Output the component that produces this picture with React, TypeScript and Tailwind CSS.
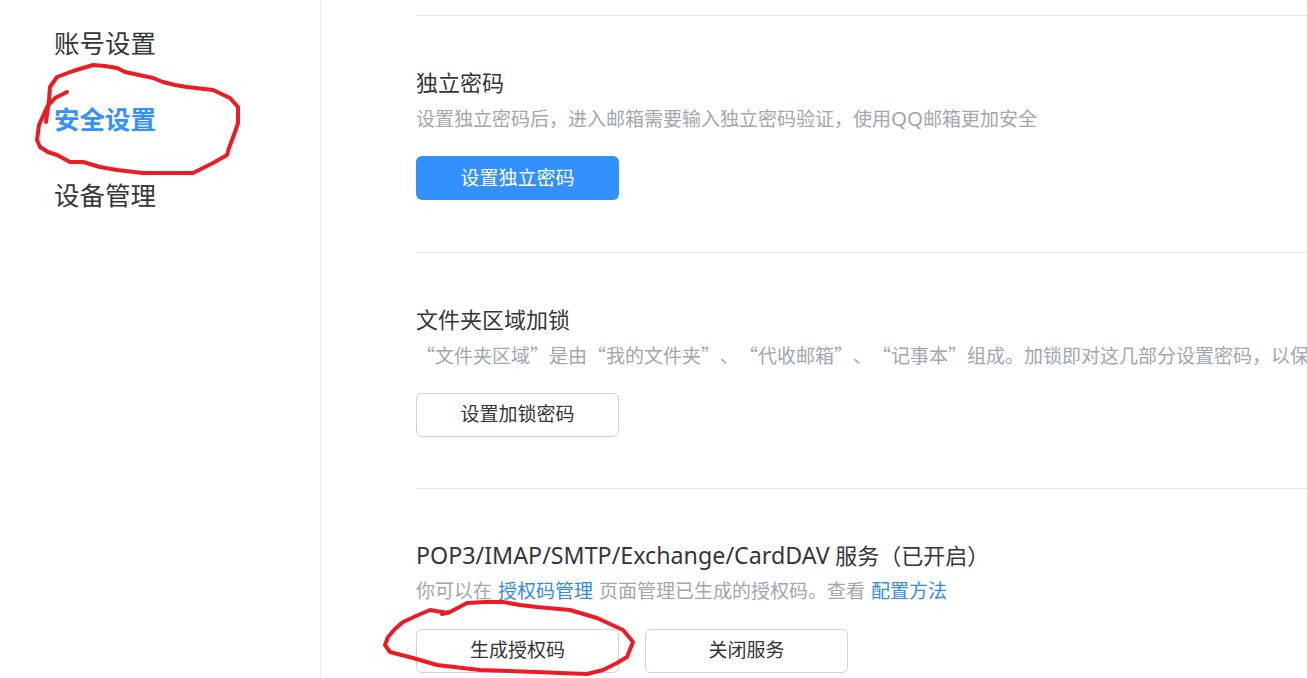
const font = { fontFamily: '"Noto Sans", "Noto Sans CJK SC", sans-serif' }

function Section({ title, children, actions }: { title: React.ReactNode; children: React.ReactNode; actions: React.ReactNode }) {
  return (
    <div className="pt-[52px] pb-[51.5px] border-b border-[#e6e8eb] w-[1000px]">
      <div className="h-7 text-[22px] leading-7 text-[#33363a]">{title}</div>
      <div className="mt-2 h-7 text-[19px] leading-7 text-[#a0a7b0] whitespace-nowrap">{children}</div>
      <div className="mt-6 flex gap-[26px]">{actions}</div>
    </div>
  )
}

function Btn({ label, primary }: { label: string; primary?: boolean }) {
  return (
    <button
      className={`w-[203px] h-11 rounded-md text-[19px] ${
        primary ? "bg-[#3390ff] text-white" : "bg-white border border-[#cfd2d6] text-[#33363a]"
      }`}
    >
      <span className={primary ? "" : "relative -top-[0.5px]"}>{label}</span>
    </button>
  )
}

export default function App() {
  return (
    <div style={font} className="relative h-[678px] w-[1307px] overflow-hidden bg-white flex [text-spacing-trim:space-all]">
      {/* Sidebar */}
      <div className="w-[321px] shrink-0 border-r border-[#e6e8eb] pl-[54px] pt-[5px] text-[25.5px] text-[#33363a]">
        <div className="h-[76px] leading-[76px]">账号设置</div>
        <div className="h-[76px] leading-[76px] font-bold text-[#3390ff]">安全设置</div>
        <div className="h-[76px] leading-[76px]">设备管理</div>
      </div>

      {/* Content */}
      <div className="flex-1 pl-[95px] overflow-hidden">
        <div className="h-4 border-b border-[#e6e8eb] w-[1000px]" />
        <Section title="独立密码" actions={<Btn label="设置独立密码" primary />}>
          设置独立密码后，进入邮箱需要输入独立密码验证，使用<span className="text-[20.5px]">QQ</span>邮箱更加安全
        </Section>
        <Section title="文件夹区域加锁" actions={<Btn label="设置加锁密码" />}>
          <span className="[font-family:'Noto_Sans_CJK_SC',sans-serif]">
            “文件夹区域”是由“我的文件夹”、“代收邮箱”、“记事本”组成。加锁即对这几部分设置密码，以保
          </span>
        </Section>
        <Section
          title={
            <>
              <span className="text-[23.25px]">POP3/IMAP/SMTP/Exchange/CardDAV</span> 服务（已开启）
            </>
          }
          actions={
            <>
              <Btn label="生成授权码" />
              <Btn label="关闭服务" />
            </>
          }
        >
          <span className="[word-spacing:1px]">
            你可以在 <span className="text-[#2f8cf5]">授权码管理</span> 页面管理已生成的授权码。查看{" "}
            <span className="text-[#2f8cf5]">配置方法</span>
          </span>
        </Section>
      </div>

      {/* Red hand-drawn annotations */}
      <svg className="absolute inset-0 pointer-events-none" width="1307" height="678" fill="none">
        <path
          d="M67 92 L61 95 L55 98 L47 107 L43 116 L39 125 L37 140 L40 147 L48 152 L57 155 L70 162 L83 162 L100 167 L117 170 L143 173 L170 173 L193 173 L203 168 L213 163 L227 155 L229 148 L232 140 L235 132 L238 123 L238 107 L230 98 L213 90 L187 87 L175 85 L163 82 L153 78 L125 72 L117 68 L105 66 L93 65 L83 68 L73 71 L57 77 L50 87 L49 100 L46 122"
          stroke="#ed1c24"
          strokeWidth="4"
          strokeLinejoin="round"
          strokeLinecap="round"
        />
        <path
          d="M442 614 L450 612 L467 603 L485 602 L503 602 L520 605 L537 607 L570 610 L597 618 L610 624 L623 630 L633 642 L627 657 L617 663 L603 670 L587 674 L560 673 L537 672 L480 670 L437 665 L413 658 L390 652 L385 645 L388 637 L395 629 L403 622 L416 616 L430 610 L448 613"
          stroke="#ed1c24"
          strokeWidth="4"
          strokeLinejoin="round"
          strokeLinecap="round"
        />
      </svg>
    </div>
  )
}
